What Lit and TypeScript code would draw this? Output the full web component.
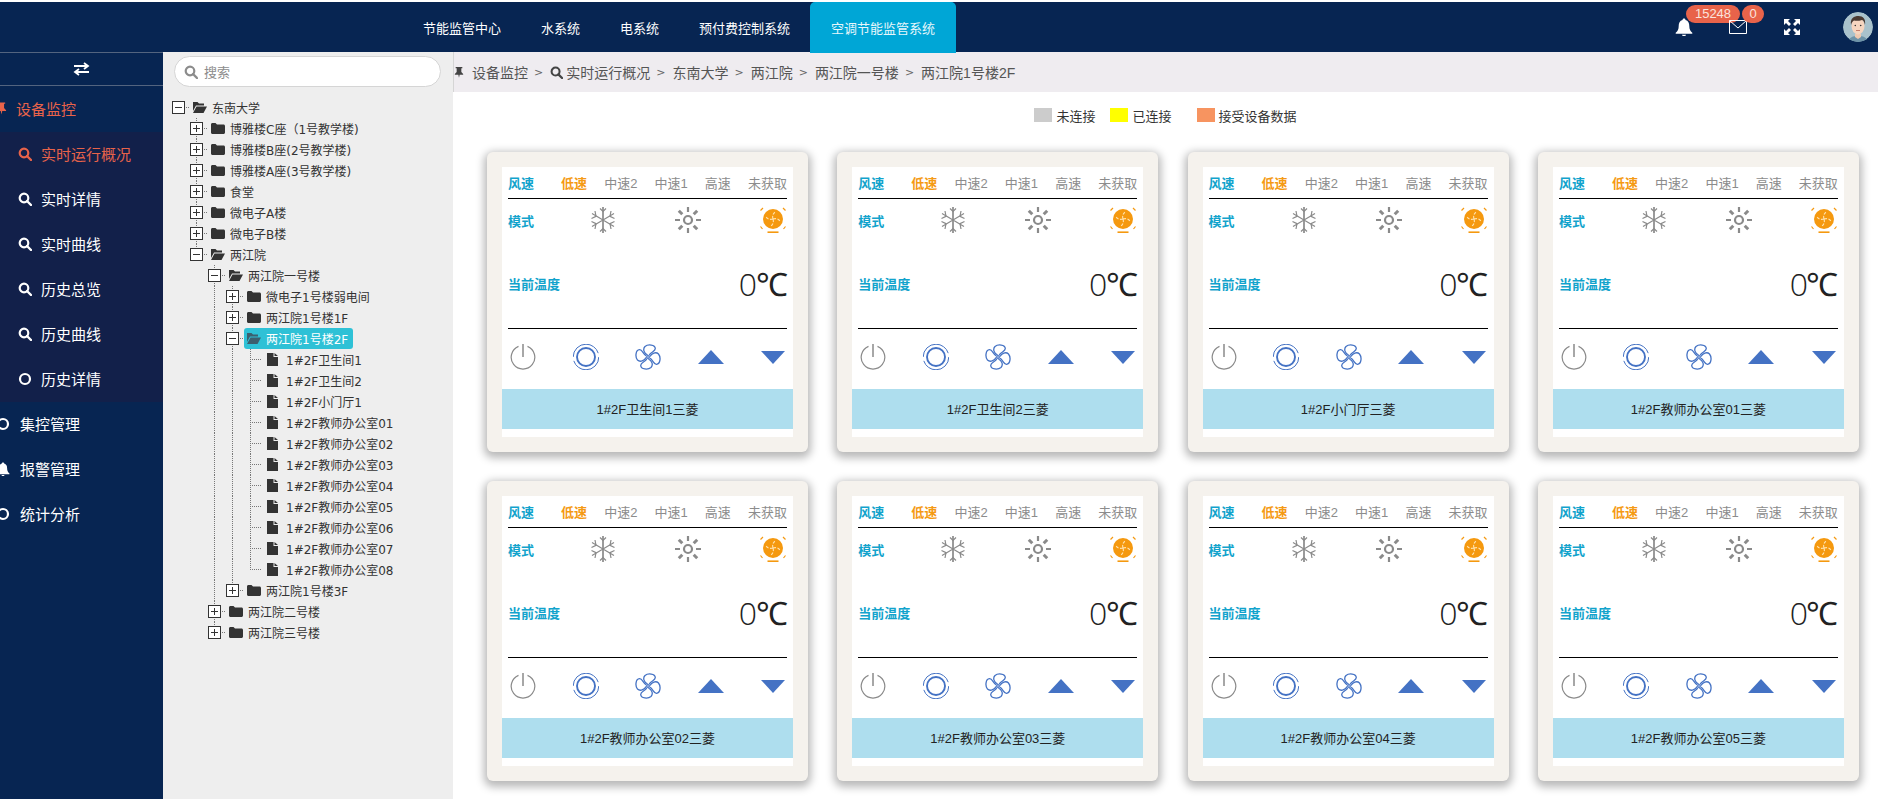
import { LitElement, html, css, svg } from "lit";
import { customElement } from "lit/decorators.js";

const searchIcon = html`<svg viewBox="0 0 14 14" class="ic"><circle cx="6" cy="6" r="4.3" fill="none" stroke="currentColor" stroke-width="2.2"/><path d="M9 9l4 4" stroke="currentColor" stroke-width="2.4" stroke-linecap="round"/></svg>`;
const circleIcon = html`<svg viewBox="0 0 14 14" class="ic"><circle cx="7" cy="7" r="5" fill="none" stroke="currentColor" stroke-width="2.2"/></svg>`;
const pinIcon = html`<svg viewBox="0 0 12 14" class="pin"><path d="M2 1h8v1.4H8.8V7L11 9.4V10.4H6.8L6 14l-.8-3.6H1V9.4L3.2 7V2.400H2z" fill="currentColor"/></svg>`;
const bellPath = svg`<path d="M9 0.5c1 0 1.500.7 1.500 1.500 2.800.8 3.800 3 3.800 6 0 3.200 1 5 3 6.800v1H.7v-1c2-1.800 3-3.600 3-6.800 0-3 1-5.200 3.800-6C7.500 1.200 8 .5 9 .5z M7 16.800h4c0 1-1 1.400-2 1.400s-2-.4-2-1.400z" fill="currentColor"/>`;
const bellIcon = html`<svg viewBox="0 0 18 18" class="bell">${bellPath}</svg>`;
const bellSmall = html`<svg viewBox="0 0 18 18" class="ic">${bellPath}</svg>`;

const snow = html`<svg viewBox="0 0 26 26" class="ci"><g fill="none" stroke="#8a8a8a" stroke-width="1.200">
<path d="M13 0v26" stroke-width="1.700"/><path d="M2 6.500l22 13M24 6.500L2 19.500"/>
<path d="M10 1.500l3 3 3-3M10 24.500l3-3 3 3"/>
<path d="M1.500 11.500L6 9.300 5 4M24.500 11.500L20 9.300 21 4M1.500 14.500L6 16.700 5 22M24.500 14.500L20 16.700 21 22"/></g></svg>`;
const sun = html`<svg viewBox="0 0 26 26" class="ci"><g fill="none" stroke="#8a8a8a"><circle cx="13" cy="13" r="4" stroke-width="2.200"/>
<path d="M13 0v5M13 21v5M0 13h5M21 13h5" stroke-width="2.200"/><path d="M3.800 3.800l3.500 3.500M18.700 18.700l3.500 3.500M3.800 22.200l3.500-3.500M18.700 7.300l3.500-3.500" stroke-width="3"/></g></svg>`;
const auto = html`<svg viewBox="0 0 26 26" class="ci"><circle cx="13" cy="12" r="10" fill="#f5990f"/>
<g stroke="#ffe3b0" stroke-width="1.100" fill="none" stroke-dasharray="3 1.500"><path d="M13 12c-1-3 0-6 3-7.500M13 12c3-1 6 0 7.500 3M13 12c1 3 0 6-3 7.500M13 12c-3 1-6 0-7.500-3"/></g>
<g fill="none" stroke="#f5990f" stroke-width="1.200"><path d="M.5 3.500L3 1M25.500 3.500L23 1M.5 19.500l2 2.500M25.500 19.500l-2 2.500"/><path d="M7.500 25.200h11" stroke-width="1.600"/></g></svg>`;
const power = html`<svg viewBox="0 0 26 26" class="ci"><path d="M8.500 2.400A11.800 11.800 0 1 0 17.500 2.400" fill="none" stroke="#8a8a8a" stroke-width="1.200"/><path d="M13 0v13" stroke="#8a8a8a" stroke-width="1.500"/></svg>`;
const ring = html`<svg viewBox="0 0 26 26" class="ci"><g fill="none" stroke="#4472c4"><circle cx="13" cy="13" r="12.800" stroke-width="1" stroke-dasharray="36 4"/><circle cx="13" cy="13" r="9" stroke-width="1.900"/></g></svg>`;
const fan = html`<svg viewBox="0 0 26 26" class="ci"><g fill="none" stroke="#4472c4" stroke-width="1.300" stroke-linejoin="round">
${[0, 90, 180, 270].map(
  (a) => svg`<path transform="rotate(${a} 13 13)" d="M12.600 11C9 9.500 7.500 5 10 2.500C13 0 20 .5 20.300 4.500C20.500 7.500 15.500 8 14.200 11.300"/>`,
)}<circle cx="13" cy="13" r="1.300"/></g></svg>`;

type Node = { t: string; open?: boolean; kids?: Node[]; leaf?: boolean; sel?: boolean };
const rooms = ["卫生间1", "卫生间2", "小门厅1", "教师办公室01", "教师办公室02", "教师办公室03", "教师办公室04", "教师办公室05", "教师办公室06", "教师办公室07", "教师办公室08"];
const tree: Node = {
  t: "东南大学",
  open: true,
  kids: [
    { t: "博雅楼C座（1号教学楼)" },
    { t: "博雅楼B座(2号教学楼)" },
    { t: "博雅楼A座(3号教学楼)" },
    { t: "食堂" },
    { t: "微电子A楼" },
    { t: "微电子B楼" },
    {
      t: "两江院",
      open: true,
      kids: [
        {
          t: "两江院一号楼",
          open: true,
          kids: [
            { t: "微电子1号楼弱电间" },
            { t: "两江院1号楼1F" },
            { t: "两江院1号楼2F", open: true, sel: true, kids: rooms.map((r) => ({ t: "1#2F" + r, leaf: true })) },
            { t: "两江院1号楼3F" },
          ],
        },
        { t: "两江院二号楼" },
        { t: "两江院三号楼" },
      ],
    },
  ],
};

const cards = ["卫生间1", "卫生间2", "小门厅", "教师办公室01", "教师办公室02", "教师办公室03", "教师办公室04", "教师办公室05"];

@customElement("app-root")
export class AppRoot extends LitElement {
  static styles = css`
    :host { display: block; height: 799px; width: 100%; overflow: hidden; background: #fff; padding-top: 2px; box-sizing: border-box; font-family: "Liberation Sans", "Noto Sans CJK SC", sans-serif; font-size: 13px; color: #333; }
    .ic { width: 14px; height: 14px; flex: none; }
    .pin { width: 11px; height: 14px; flex: none; }
    .bell { width: 18px; height: 18px; display: block; }
    .ei { display: block; width: 100%; height: 100%; }
    .nav { height: 50px; background: #072552; display: flex; align-items: stretch; padding-left: 403px; color: #fff; position: relative; }
    .nav-item { padding: 0 20px; display: flex; align-items: center; }
    .nav-item.on { padding: 0 21px; background: #00a6d6; border-radius: 5px 5px 0 0; height: 51px; position: relative; z-index: 2; color: #e6f6fb; }
    .tools { margin-left: auto; display: flex; align-items: center; padding-right: 5px; }
    .tool { position: relative; display: block; }
    .badge { position: absolute; height: 18px; line-height: 18px; border-radius: 9px; background: #e8634a; color: #fbe3dd; text-align: center; font-size: 13px; }
    .b1 { left: 11px; top: -13px; width: 54px; }
    .b2 { left: 13px; top: -15px; width: 22px; }
    .env { width: 18px; height: 14px; margin-left: 36px; }
    .exp { width: 16px; height: 16px; margin-left: 37px; }
    .ava { width: 30px; height: 30px; margin-left: 43px; border-radius: 50%; display: block; }

    .main { display: flex; height: 747px; }
    .side { width: 163px; flex: none; background: #072552; color: #fff; border-top: 1px solid #53647f; box-sizing: border-box; font-size: 15px; overflow: hidden; }
    .sw { height: 33px; border-bottom: 1px solid #53647f; display: flex; align-items: center; justify-content: center; box-sizing: border-box; }
    .sw svg { width: 17px; height: 14px; }
    .m { height: 45px; display: flex; align-items: center; gap: 9px; margin-left: -4px; padding-bottom: 2px; box-sizing: border-box; }
    .m.on { color: #e8634a; height: 46px; }
    .m .ic { margin-right: 1px; }
    .sub { background: #12204a; }
    .s { height: 45px; display: flex; align-items: center; gap: 9px; padding-left: 18px; padding-bottom: 2px; box-sizing: border-box; }
    .s.on { color: #e8634a; }

    .panel { width: 290px; flex: none; background: #eee; box-sizing: border-box; padding: 4px 0 0 9px; font-size: 12px; overflow: hidden; }
    .search { margin: 0 12px 0 2px; height: 31px; box-sizing: border-box; border: 1px solid #d5d5d5; border-radius: 16px; background: #fff; display: flex; align-items: center; gap: 6px; padding-left: 9px; color: #8c8c8c; font-size: 13px; }
    .tree { margin-top: 9.500px; font-family: "DejaVu Sans", "Noto Sans CJK SC", sans-serif; color: #333; }
    .row { height: 21px; display: flex; align-items: center; white-space: nowrap; }
    .g { width: 18px; height: 21px; flex: none; box-sizing: border-box; }
    .g.l, .t.line { background: linear-gradient(#777 50%, transparent 50%) 6px 0 / 1px 2px repeat-y; }
    .t { width: 18px; height: 21px; flex: none; display: flex; align-items: center; position: relative; }
    .t.last::before { content: ""; position: absolute; left: 6px; top: 0; width: 1px; height: 10px; background: linear-gradient(#777 50%, transparent 50%) 0 0 / 1px 2px repeat-y; }
    .box { width: 13px; height: 13px; box-sizing: border-box; border: 1px solid #333; background: #fff; position: relative; flex: none; }
    .box::before { content: ""; position: absolute; left: 2px; right: 2px; top: 5px; height: 1px; background: #333; }
    .box.plus::after { content: ""; position: absolute; top: 2px; bottom: 2px; left: 5px; width: 1px; background: #333; }
    .dash { width: 3px; height: 1px; flex: none; margin-left: 1px; background: linear-gradient(90deg, #777 50%, transparent 50%) 0 0 / 2px 1px repeat-x; }
    .hline { position: absolute; left: 6px; top: 10px; width: 12px; height: 1px; background: linear-gradient(90deg, #777 50%, transparent 50%) 0 0 / 2px 1px repeat-x; }
    .node { display: inline-flex; align-items: center; height: 21px; gap: 5px; padding: 0 5px 0 3px; border-radius: 3px; }
    .node.sel { background: #2ec1d6; color: #fff; }
    .node.sel .fi { color: #3c5f6e; }
    .fi { width: 14px; height: 12px; flex: none; color: #333; }
    .leafi { width: 11px; height: 13px; margin-left: 2px; margin-right: 3px; flex: none; color: #333; }

    .content { flex: 1; min-width: 0; overflow: hidden; }
    .crumb { height: 40px; background: #efecf0; border-left: 1px solid #d5d5d5; display: flex; align-items: center; gap: 6px; color: #555; font-size: 14px; white-space: nowrap; }
    .crumb .pin { color: #444; width: 10px; margin-right: 2px; }
    .crumb .ic { color: #444; width: 13px; height: 13px; margin-right: -3px; }
    .sep { color: #666; font-family: "DejaVu Sans", sans-serif; font-size: 11px; margin-right: 1px; }
    .legend { height: 60px; display: flex; align-items: center; justify-content: center; box-sizing: border-box; padding-bottom: 14px; gap: 15px; font-size: 13px; color: #333; }
    .li { display: flex; align-items: center; gap: 4px; }
    .li.far { margin-left: 10px; }
    .sq { width: 18px; height: 14px; }
    .sq.a { background: #ccc; }
    .sq.b { background: #ff0; }
    .sq.c { background: #f79460; }
    .grid { display: grid; grid-template-columns: repeat(4, 321px); column-gap: 29.3px; row-gap: 29px; padding-left: 34px; }
    .card { height: 300px; box-sizing: border-box; padding: 15px; background: #f5f2ed; border-radius: 6px; box-shadow: 0 3px 9px 3px rgba(0, 0, 0, 0.28); }
    .inner { height: 270px; background: #fff; display: flex; flex-direction: column; }
    .spd { margin: 0 6px; height: 32px; box-sizing: border-box; border-bottom: 1.500px solid #000; display: flex; align-items: center; color: #8c8c8c; }
    .lb { color: #12a3cc; font-weight: bold; white-space: nowrap; }
    .opts { flex: 1; margin-left: 27px; display: flex; justify-content: space-between; }
    .opts .cur { color: #f59a13; font-weight: bold; }
    .mode { margin: 0 6px; height: 45px; display: flex; align-items: center; padding-bottom: 3px; box-sizing: border-box; }
    .mode .ci:first-of-type { margin-left: 56px; }
    .mode .ci + .ci { margin-left: 59px; }
    .ci { width: 26px; height: 26px; flex: none; display: block; }
    .temp { margin: 0 6px; height: 85px; box-sizing: border-box; border-bottom: 1.500px solid #000; display: flex; align-items: center; justify-content: space-between; padding-bottom: 5px; }
    .val { font-size: 32px; font-family: "Open Sans", sans-serif; font-weight: 300; color: #222; letter-spacing: -1.500px; padding-right: 1px; }
    .ctl { height: 60px; box-sizing: border-box; padding: 0 7px 4px 8px; display: flex; align-items: center; justify-content: space-between; }
    .tri { width: 26px; height: 15px; display: block; }
    .name { height: 40px; background: #aedeee; display: flex; align-items: center; justify-content: center; color: #222; padding-bottom: 2px; box-sizing: border-box; }
  `;

  private renderNode(n: Node, guides: boolean[], last: boolean): unknown {
    const isRoot = n === tree;
    const row = html`<div class="row">
      ${guides.map((g) => html`<span class="g ${g ? "l" : ""}"></span>`)}
      ${n.leaf
        ? html`<span class="t ${last ? "last" : "line"}"><span class="hline"></span></span>
            <span class="node"><svg class="leafi" viewBox="0 0 11 13"><path d="M0 0h6.500v4H11v9H0zM7.500 0L11 3H7.500z" fill="currentColor"/></svg>${n.t}</span>`
        : html`<span class="t ${isRoot ? "" : last ? "last" : "line"}"><span class="box ${n.open ? "" : "plus"}"></span><span class="dash"></span></span>
            <span class="node ${n.sel ? "sel" : ""}">${this.folder(!!n.open)}${n.t}</span>`}
    </div>`;
    if (!n.open || !n.kids) return row;
    const kg = isRoot ? [false] : [...guides, !last];
    return html`${row}${n.kids.map((k, i) => this.renderNode(k, kg, i === n.kids!.length - 1))}`;
  }

  private folder(open: boolean) {
    return open
      ? html`<svg class="fi" viewBox="0 0 14 12"><path d="M0 1h4.500l1.500 1.500h5V4.500H3L0 10zM3.500 5.500H14L10.500 12H0z" fill="currentColor"/></svg>`
      : html`<svg class="fi" viewBox="0 0 14 12"><path d="M0 2.500C0 1.500.7 1 1.500 1h3L6 2.500h6.500c.8 0 1.500.7 1.500 1.500v6.500c0 .8-.7 1.500-1.500 1.500h-11C.7 12 0 11.300 0 10.500z" fill="currentColor"/></svg>`;
  }

  private card(name: string) {
    return html`<div class="card"><div class="inner">
      <div class="spd"><span class="lb">风速</span><div class="opts"><span class="cur">低速</span><span>中速2</span><span>中速1</span><span>高速</span><span>未获取</span></div></div>
      <div class="mode"><span class="lb">模式</span>${snow}${sun}${auto}</div>
      <div class="temp"><span class="lb">当前温度</span><span class="val">0℃</span></div>
      <div class="ctl">${power}${ring}${fan}
        <svg class="tri" viewBox="0 0 26 15"><path d="M13 0l13 14H0z" fill="#4472c4"/></svg>
        <svg class="tri" viewBox="0 0 26 15"><path d="M1 1h24L13 14z" fill="#4472c4"/></svg>
      </div>
      <div class="name">1#2F${name}三菱</div>
    </div></div>`;
  }

  render() {
    return html`
      <div class="nav">
        <div class="nav-item">节能监管中心</div>
        <div class="nav-item">水系统</div>
        <div class="nav-item">电系统</div>
        <div class="nav-item">预付费控制系统</div>
        <div class="nav-item on">空调节能监管系统</div>
        <div class="tools">
          <span class="tool">${bellIcon}<span class="badge b1">15248</span></span>
          <span class="tool env"><svg viewBox="0 0 18 14" class="ei"><path d="M.5.500h17v13H.5zM.5.500L9 8l8.500-7.500" fill="none" stroke="#fff"/></svg><span class="badge b2">0</span></span>
          <span class="tool exp"><svg viewBox="0 0 16 16" class="ei"><path d="M0 0h6L4 2l3 3-2 2-3-3-2 2zM16 0v6l-2-2-3 3-2-2 3-3-2-2zM0 16v-6l2 2 3-3 2 2-3 3 2 2zM16 16h-6l2-2-3-3 2-2 3 3 2-2z" fill="#fff"/></svg></span>
          <svg class="ava" viewBox="0 0 30 30"><circle cx="15" cy="15" r="15" fill="#a9c2cc"/><path d="M5 30c1-5 5-6 10-6s9 1 10 6z" fill="#6d93a8"/><path d="M12 22h6v3l-3 2-3-2z" fill="#efc9b0"/><ellipse cx="15" cy="14" rx="6.500" ry="8.500" fill="#f6d5bf"/><path d="M8 13C7 6 11 4 15.500 4S23 7 22 13c-.6-3-1.500-4.500-3-5-3 1-6 1-8 .5-1.500 1-2.400 2-3 4.500z" fill="#4a3a32"/><circle cx="12.300" cy="13.500" r=".8" fill="#333"/><circle cx="17.700" cy="13.500" r=".8" fill="#333"/><path d="M13 18.500h4" stroke="#c77f6c"/></svg>
        </div>
      </div>
      <div class="main">
        <div class="side">
          <div class="sw"><svg viewBox="0 0 17 14"><path d="M1 4h13M11 1l4 3-4 3M16 10H3M6 7l-4 3 4 3" fill="none" stroke="#fff" stroke-width="1.800"/></svg></div>
          <div class="m on">${pinIcon}设备监控</div>
          <div class="sub">
            <div class="s on">${searchIcon}实时运行概况</div>
            <div class="s">${searchIcon}实时详情</div>
            <div class="s">${searchIcon}实时曲线</div>
            <div class="s">${searchIcon}历史总览</div>
            <div class="s">${searchIcon}历史曲线</div>
            <div class="s">${circleIcon}历史详情</div>
          </div>
          <div class="m">${circleIcon}集控管理</div>
          <div class="m">${bellSmall}报警管理</div>
          <div class="m">${circleIcon}统计分析</div>
        </div>
        <div class="panel">
          <div class="search">${searchIcon}搜索</div>
          <div class="tree">${this.renderNode(tree, [], true)}</div>
        </div>
        <div class="content">
          <div class="crumb">${pinIcon}设备监控<span class="sep">&gt;</span>${searchIcon}实时运行概况<span class="sep">&gt;</span>东南大学<span class="sep">&gt;</span>两江院<span class="sep">&gt;</span>两江院一号楼<span class="sep">&gt;</span>两江院1号楼2F</div>
          <div class="legend">
            <div class="li"><span class="sq a"></span>未连接</div>
            <div class="li"><span class="sq b"></span>已连接</div>
            <div class="li far"><span class="sq c"></span>接受设备数据</div>
          </div>
          <div class="grid">${cards.map((c) => this.card(c))}</div>
        </div>
      </div>
    `;
  }
}
